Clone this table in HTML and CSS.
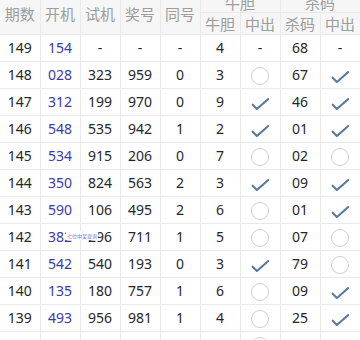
FILE: index.html
```html
<!DOCTYPE html>
<html lang="zh">
<head>
<meta charset="utf-8">
<link rel="stylesheet" href="styles.css">
</head>
<body>
<div class="wrap">
<table class="tbl">
<colgroup><col><col><col><col><col><col><col><col><col></colgroup>
<thead>
<tr class="h1">
<th rowspan="2">期数</th><th rowspan="2">开机</th><th rowspan="2">试机</th><th rowspan="2">奖号</th><th rowspan="2">同号</th><th colspan="2">牛胆</th><th colspan="2">杀码</th>
</tr>
<tr class="h2"><th>牛胆</th><th>中出</th><th>杀码</th><th>中出</th></tr>
</thead>
<tbody>
<tr><td>149</td><td class="k">154</td><td>-</td><td>-</td><td>-</td><td>4</td><td>-</td><td>68</td><td>-</td></tr>
<tr><td>148</td><td class="k">028</td><td>323</td><td>959</td><td>0</td><td>3</td><td><span class="o"></span></td><td>67</td><td><span class="c"></span></td></tr>
<tr><td>147</td><td class="k">312</td><td>199</td><td>970</td><td>0</td><td>9</td><td><span class="c"></span></td><td>46</td><td><span class="c"></span></td></tr>
<tr><td>146</td><td class="k">548</td><td>535</td><td>942</td><td>1</td><td>2</td><td><span class="c"></span></td><td>01</td><td><span class="c"></span></td></tr>
<tr><td>145</td><td class="k">534</td><td>915</td><td>206</td><td>0</td><td>7</td><td><span class="o"></span></td><td>02</td><td><span class="o"></span></td></tr>
<tr><td>144</td><td class="k">350</td><td>824</td><td>563</td><td>2</td><td>3</td><td><span class="c"></span></td><td>09</td><td><span class="c"></span></td></tr>
<tr><td>143</td><td class="k">590</td><td>106</td><td>495</td><td>2</td><td>6</td><td><span class="o"></span></td><td>01</td><td><span class="c"></span></td></tr>
<tr><td>142</td><td class="k">382</td><td>296</td><td>711</td><td>1</td><td>5</td><td><span class="o"></span></td><td>07</td><td><span class="o"></span></td></tr>
<tr><td>141</td><td class="k">542</td><td>540</td><td>193</td><td>0</td><td>3</td><td><span class="c"></span></td><td>79</td><td><span class="o"></span></td></tr>
<tr><td>140</td><td class="k">135</td><td>180</td><td>757</td><td>1</td><td>6</td><td><span class="o"></span></td><td>09</td><td><span class="c"></span></td></tr>
<tr><td>139</td><td class="k">493</td><td>956</td><td>981</td><td>1</td><td>4</td><td><span class="o"></span></td><td>25</td><td><span class="c"></span></td></tr>
<tr><td>138</td><td class="k">207</td><td>631</td><td>414</td><td>1</td><td>8</td><td><span class="o"></span></td><td>36</td><td><span class="c"></span></td></tr>
</tbody>
</table>
<div class="tip">七位中奖查询</div>
</div>
</body>
</html>
```
FILE: styles.css
```css
html, body { margin: 0; padding: 0; background: #fff; }
body { font-family: "Noto Sans", "Noto Sans CJK SC", sans-serif; }
.wrap { position: relative; width: 360px; height: 340px; overflow: hidden; }
.tbl {
  width: 360px;
  table-layout: fixed;
  border-collapse: collapse;
  margin-top: -7px;
}
.tbl col { width: 40px; }
.tbl th, .tbl td {
  border: 1px solid #e9e9e9;
  padding: 0;
  text-align: center;
  vertical-align: middle;
}
.tbl th:first-child, .tbl td:first-child { border-left: none; }
.tbl th {
  background: #f6f6f6;
  color: #9c9c9c;
  font-weight: normal;
  font-size: 15px;
  line-height: 18px;
}
.tbl thead tr:first-child th { border-top: none; }
.h1 th { height: 19px; }
.h2 th { height: 21px; }
.tbl td {
  height: 26px;
  font-size: 14px;
  line-height: 18px;
  color: #262626;
}
.tbl td.k { color: #3a3aa6; }
.o {
  display: inline-block;
  width: 16px;
  height: 16px;
  border: 1.5px solid #cfcfcf;
  border-radius: 50%;
  vertical-align: middle;
}
.c {
  display: inline-block;
  width: 18px;
  height: 11px;
  vertical-align: middle;
  position: relative;
}
.c::before, .c::after {
  content: "";
  position: absolute;
  background: #55779f;
  height: 1.8px;
  border-radius: 1px;
  transform-origin: 0 50%;
}
.c::before { left: 1px; top: 5px; width: 7.5px; transform: rotate(45deg); }
.c::after { left: 6.3px; top: 10.3px; width: 15.5px; transform: rotate(-42deg); }
.tip {
  position: absolute;
  left: 66px;
  top: 231px;
  background: #fff;
  color: #5d82dc;
  font-size: 10px;
  line-height: 18px;
  padding: 0 2px;
  white-space: nowrap;
  transform: scale(0.5);
  transform-origin: 0 0;
}
```
